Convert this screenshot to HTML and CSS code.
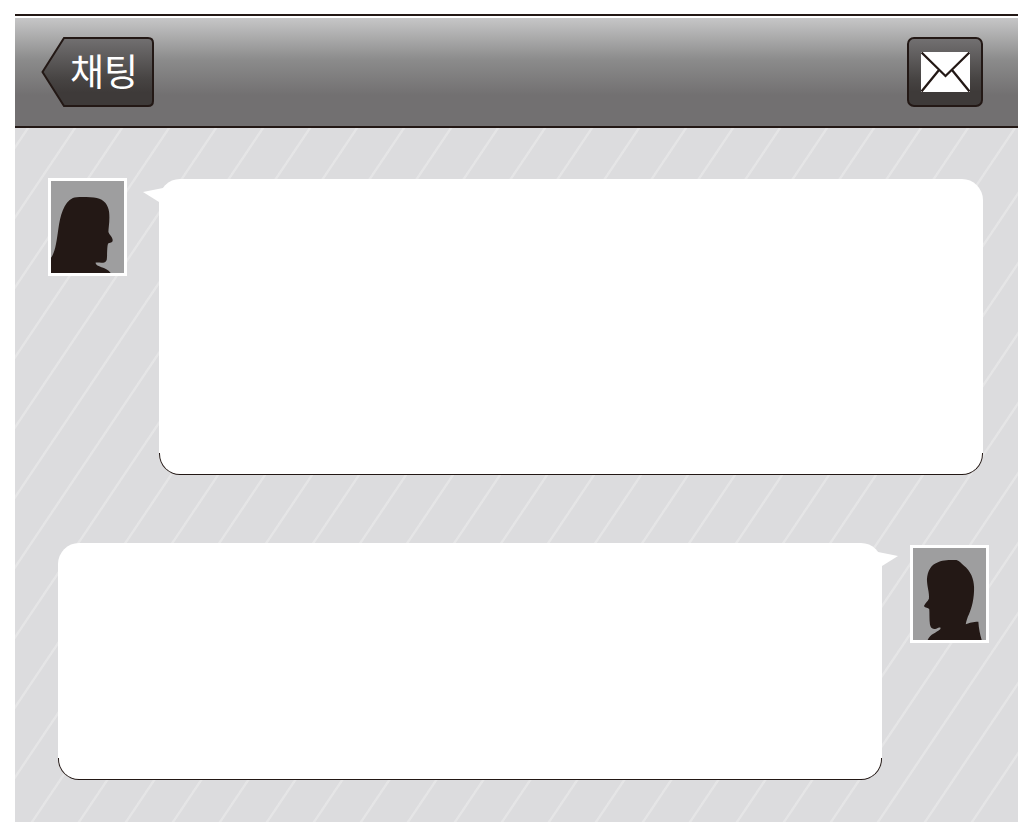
FILE: index.html
```html
<!DOCTYPE html>
<html lang="ko">
<head>
    <meta charset="UTF-8">
    <meta name="viewport" content="width=device-width, initial-scale=1">
    <title>채팅</title>
    <link rel="stylesheet" href="styles.css">
</head>
<body>
    <header class="topbar">
        <button type="button" class="back-btn">
            <svg class="back-shape" viewBox="0 0 114 70" aria-hidden="true">
                <defs>
                    <linearGradient id="dark" x1="0" y1="0" x2="0" y2="1">
                        <stop offset="0" stop-color="#727071"/>
                        <stop offset="0.6" stop-color="#474443"/>
                        <stop offset="0.8" stop-color="#3e3a39"/>
                        <stop offset="1" stop-color="#3e3a39"/>
                    </linearGradient>
                </defs>
                <path d="M23 1H107Q112 1 112 6V64Q112 69 107 69H23L1.500 35Z" fill="url(#dark)" stroke="#231815" stroke-width="2"/>
            </svg>
            <span class="back-label">채팅</span>
        </button>
        <button type="button" class="mail-btn" aria-label="메시지">
            <svg class="mail-icon" viewBox="0 0 49 40" aria-hidden="true">
                <rect width="49" height="40" fill="#fff"/>
                <path d="M0.500 0.500L24.500 24L48.500 0.500M0.500 39.500L18 18M48.500 39.500L31 18" fill="none" stroke="#231815" stroke-width="2.300"/>
            </svg>
        </button>
    </header>

    <main class="chat">
        <div class="message received">
            <div class="avatar">
                <svg viewBox="0 0 220 276" preserveAspectRatio="none" aria-hidden="true">
                    <path d="M0 230C13 214 17 180 22 145C28 104 38 64 66 51C78 46 120 48 138 51C160 55 172 72 175 92C178 118 173 140 173 153C176 162 183 166 185 173C188 182 184 185 173 187C168 192 170 225 168 236C165 249 150 244 134 245C136 260 165 255 180 276H0Z" fill="#231815"/>
                </svg>
            </div>
            <div class="bubble bubble-long">
                <svg class="tail" viewBox="0 0 20 14" aria-hidden="true"><path d="M0 4L20 0V14H16Z" fill="#fff"/></svg>
            </div>
        </div>

        <div class="message sent">
            <div class="bubble bubble-short">
                <svg class="tail" viewBox="0 0 20 14" aria-hidden="true"><path d="M20 4L0 0V14H4Z" fill="#fff"/></svg>
            </div>
            <div class="avatar">
                <svg viewBox="0 0 220 276" preserveAspectRatio="none" aria-hidden="true">
                    <path d="M44 276C52 258 70 255 82 244C86 236 78 239 70 242C59 245 53 241 51 229C49 215 50 196 49 184C46 178 37 181 33 174C37 164 44 161 48 152C50 135 42 115 42 94C44 68 54 50 77 42C92 36 108 36 131 36C141 39 145 45 152 52C175 70 183 93 184 117C185 150 177 180 169 198C163 210 161 219 159 229C172 224 180 221 197 221C198 240 202 260 207 276Z" fill="#231815"/>
                </svg>
            </div>
        </div>
    </main>
</body>
</html>
```

FILE: styles.css
```css
* {
    box-sizing: border-box;
}
body {
    display: flex;
    flex-direction: column;
    min-height: 100vh;
    margin: 0;
    padding: 14px 15px 0;
    background: #fff;
    font-family: "Noto Sans CJK KR", sans-serif;
}
button {
    padding: 0;
    border: none;
    background: none;
    cursor: pointer;
}
svg {
    display: block;
}

.topbar {
    display: flex;
    justify-content: space-between;
    padding: 21px 35px 19px 26px;
    border-top: 2px solid #231815;
    border-bottom: 2px solid #231815;
    background: linear-gradient(#c9c9ca, #8b8b8b 40%, #727071 72%, #727071);
    box-shadow: inset 0 2px #fff;
}
.back-btn {
    position: relative;
    width: 114px;
    height: 70px;
    padding: 0 0 4px 12px;
    color: #fff;
}
.back-shape {
    position: absolute;
    top: 0;
    left: 0;
    width: 114px;
    height: 70px;
}
.back-label {
    position: relative;
    font-family: "Noto Sans CJK KR", sans-serif;
    font-size: 37px;
    font-weight: 400;
    line-height: 66px;
}
.mail-btn {
    display: flex;
    align-items: center;
    justify-content: center;
    width: 76px;
    height: 70px;
    border: 2px solid #231815;
    border-radius: 7px;
    background: linear-gradient(#727071, #474443 60%, #3e3a39 80%);
}
.mail-icon {
    width: 49px;
    height: 40px;
}

.chat {
    flex: 1;
    display: flex;
    flex-direction: column;
    gap: 68px;
    padding: 50px 0 42px;
    background-color: #dcdcde;
    /* one diagonal per tile, the corner stops join it to its neighbours */
    background-image: linear-gradient(to bottom right, #e5e5e6 1%, transparent 2%, transparent 48%, #e5e5e6 49%, #e5e5e6 51%, transparent 52%, transparent 98%, #e5e5e6 99%);
    background-size: 47px 70px;
    background-position: 13px 0;
}
.message {
    display: flex;
    align-items: flex-start;
}
.received {
    gap: 32px;
    padding: 0 35px 0 33px;
}
.sent {
    gap: 28px;
    padding: 0 29px 0 43px;
}
.avatar {
    flex: none;
    width: 79px;
    height: 98px;
    border: 3px solid #fff;
    background: #9e9e9f;
}
.avatar svg {
    width: 100%;
    height: 100%;
}
.received .bubble {
    margin-top: 1px;
}
.sent .avatar {
    margin-top: 2px;
}
.bubble {
    position: relative;
    flex: 1;
    border-radius: 21px;
    background: #fff;
}
.bubble-long {
    min-height: 296px;
}
.bubble-short {
    min-height: 237px;
}
.bubble::after {
    content: "";
    position: absolute;
    right: 0;
    bottom: 0;
    left: 0;
    height: 21px;
    border: 1px solid #231815;
    border-top: none;
    border-radius: 0 0 21px 21px;
}
.tail {
    position: absolute;
    top: 9px;
    width: 20px;
    height: 14px;
}
.received .tail {
    left: -16px;
}
.sent .tail {
    right: -16px;
}
```
